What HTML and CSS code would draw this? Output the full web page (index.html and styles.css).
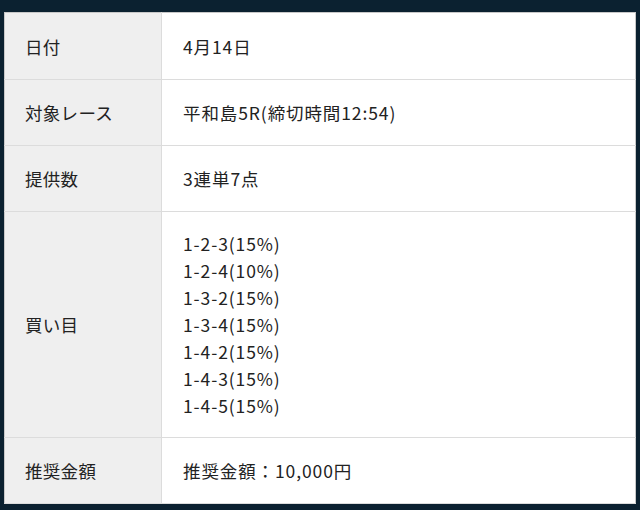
FILE: index.html
```html
<!DOCTYPE html>
<html lang="ja">
<head>
<meta charset="utf-8">
<link rel="stylesheet" href="styles.css">
</head>
<body>
<div class="frame">
  <table class="info">
    <tr><th>日付</th><td>4月14日</td></tr>
    <tr><th>対象レース</th><td>平和島5R(締切時間12:54)</td></tr>
    <tr><th>提供数</th><td>3連単7点</td></tr>
    <tr class="picks"><th>買い目</th><td>1-2-3(15%)<br>1-2-4(10%)<br>1-3-2(15%)<br>1-3-4(15%)<br>1-4-2(15%)<br>1-4-3(15%)<br>1-4-5(15%)</td></tr>
    <tr><th>推奨金額</th><td>推奨金額：10,000円</td></tr>
  </table>
</div>
</body>
</html>
```
FILE: styles.css
```css
html, body {
  margin: 0;
  padding: 0;
  background: #0b2130;
}
.frame {
  padding: 12px 4px 0 4px;
}
.info {
  width: 632px;
  border-collapse: collapse;
  background: #fff;
  border: 1px solid #c8c8c8;
  font-family: "Noto Sans CJK JP", "Noto Sans", sans-serif;
  font-size: 17.5px;
  color: #222;
}
.info th, .info td {
  text-align: left;
  font-weight: normal;
  line-height: 27px;
  padding: 19px 20px;
  border-bottom: 1px solid #dcdcdc;
  vertical-align: middle;
}
.info tr:first-child th, .info tr:first-child td {
  padding-top: 20px;
}
.info .picks td {
  padding-top: 18px;
  padding-bottom: 18px;
}
.info th {
  width: 116px;
  background: #efefef;
  border-right: 1px solid #dcdcdc;
  letter-spacing: 0.3px;
}
.info td {
  padding-left: 21px;
  letter-spacing: 0.9px;
}
```
